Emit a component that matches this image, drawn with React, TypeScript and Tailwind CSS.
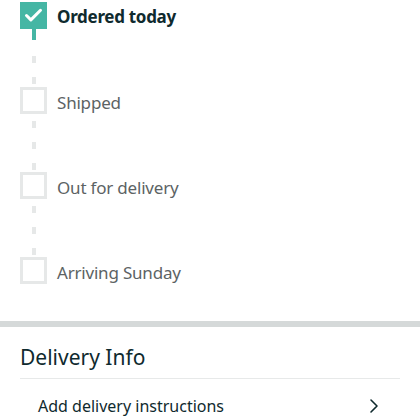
import { ChevronRight, Check } from "lucide-react";

const steps = [
  { label: "Ordered today", done: true },
  { label: "Shipped", done: false },
  { label: "Out for delivery", done: false },
  { label: "Arriving Sunday", done: false },
];

function Connector({ fromDone }: { fromDone: boolean }) {
  return (
    <div className="flex h-[58px] w-[27px] flex-col items-center">
      {fromDone ? (
        <>
          <div className="h-[11px] w-[4px] bg-[#45b6a4]" />
          <div className="mt-[16px] h-[7px] w-[4px] bg-[#e6e8e8]" />
          <div className="mt-[14px] h-[7px] w-[4px] bg-[#e6e8e8]" />
        </>
      ) : (
        <>
          <div className="mt-[7px] h-[7px] w-[4px] bg-[#e6e8e8]" />
          <div className="mt-[14px] h-[7px] w-[4px] bg-[#e6e8e8]" />
          <div className="mt-[14px] h-[7px] w-[4px] bg-[#e6e8e8]" />
        </>
      )}
    </div>
  );
}

export default function App() {
  return (
    <div className="h-[420px] w-[420px] overflow-hidden bg-white font-['Noto_Sans',sans-serif]">
      <div className="flex flex-col px-[20px] pt-[2px]">
        {steps.map((step, i) => (
          <div key={step.label} className="flex flex-col">
            <div className="flex items-center gap-[10px]">
              {step.done ? (
                <div className="flex h-[27px] w-[27px] items-center justify-center bg-[#45b6a4]">
                  <Check className="h-[21px] w-[21px] text-white" strokeWidth={3.5} />
                </div>
              ) : (
                <div className="h-[27px] w-[27px] border-[3px] border-[#e6e8e8]" />
              )}
              <span
                className={
                  step.done
                    ? "pt-[2px] text-[17px] font-bold leading-none tracking-[-0.3px] text-[#0f2a2e]"
                    : "pt-[3px] text-[17px] leading-none tracking-[-0.2px] text-[#5c6364]"
                }
              >
                {step.label}
              </span>
            </div>
            {i < steps.length - 1 && <Connector fromDone={step.done} />}
          </div>
        ))}
      </div>

      <div className="mt-[37px] h-[6px] bg-[#d5d9d9]" />

      <div className="px-[20px]">
        <div className="flex h-[52px] items-center border-b border-[#e7e9e9] pt-[10px] text-[21px] leading-none text-[#0f2a2e]">
          Delivery Info
        </div>
        <div className="flex h-[50px] items-center justify-between pl-[18px] pr-[14px] pt-[4px]">
          <span className="text-[16px] text-[#0f2a2e]">Add delivery instructions</span>
          <ChevronRight className="h-[24px] w-[24px] text-[#0f2a2e]" strokeWidth={1.6} />
        </div>
      </div>
    </div>
  );
}
